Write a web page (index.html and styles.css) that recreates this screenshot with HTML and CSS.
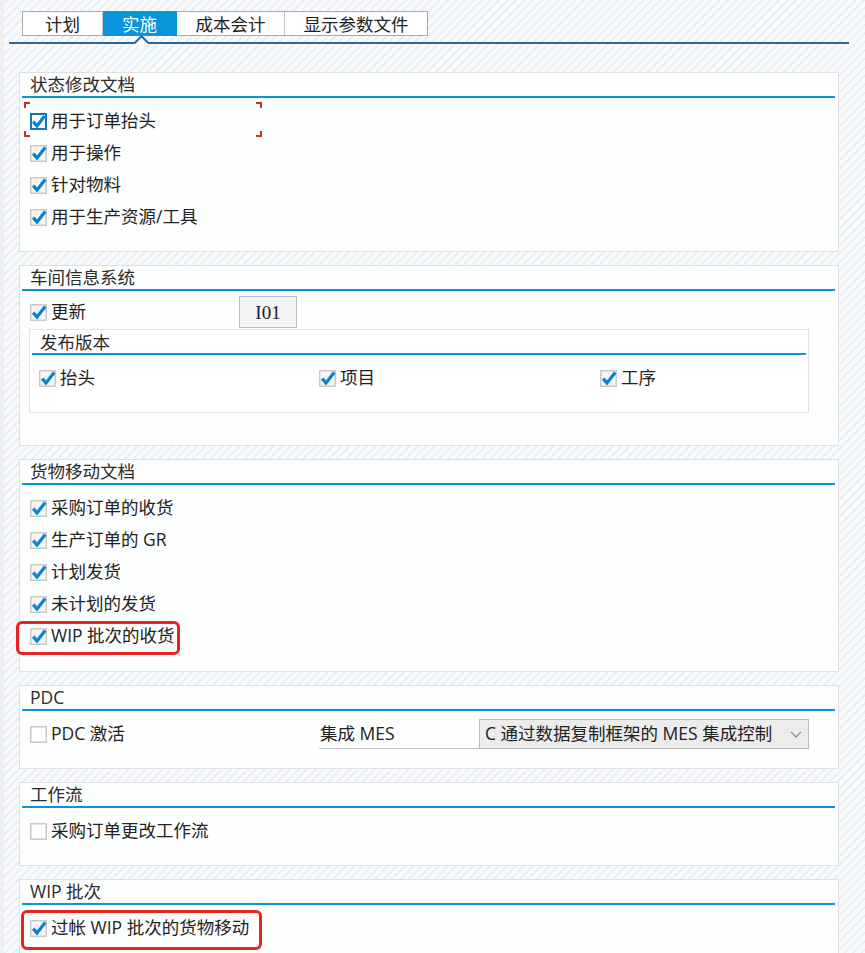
FILE: index.html
```html
<!DOCTYPE html>
<html lang="zh-CN">
<head>
<meta charset="utf-8">
<title>实施</title>
<link rel="stylesheet" href="styles.css">
</head>
<body>
<svg class="defs" width="0" height="0" aria-hidden="true">
  <defs>
    <symbol id="cb-on" viewBox="0 0 17 17">
      <rect x="0.75" y="0.75" width="15.5" height="15.5" fill="#f6f6f6" stroke="#c9c9c9" stroke-width="1.5"/>
      <path d="M3.2 8.6 L7 13 L15.2 2.6" fill="none" stroke="#0a80d2" stroke-width="3.2" stroke-linejoin="miter"/>
    </symbol>
    <symbol id="cb-focus" viewBox="0 0 17 17">
      <rect x="1" y="1" width="15" height="15" fill="#ffffff" stroke="#1a74bd" stroke-width="2"/>
      <path d="M3.2 8.6 L7 13 L14.6 3" fill="none" stroke="#0a80d2" stroke-width="3.2" stroke-linejoin="miter"/>
    </symbol>
    <symbol id="cb-off" viewBox="0 0 17 17">
      <rect x="0.75" y="0.75" width="15.5" height="15.5" fill="#ffffff" stroke="#c9c9c9" stroke-width="1.5"/>
    </symbol>
  </defs>
</svg>

<div class="tabbar">
  <div class="tab tab-1">计划</div>
  <div class="tab tab-2 active">实施</div>
  <div class="tab tab-3">成本会计</div>
  <div class="tab tab-4">显示参数文件</div>
</div>
<div class="tabline"></div>

<main class="content">
  <section class="group">
    <div class="group-head">状态修改文档</div>
    <div class="rows">
      <div class="row focused">
        <span class="focus-frame"></span>
        <svg class="cb"><use href="#cb-focus"/></svg><span>用于订单抬头</span>
      </div>
      <div class="row"><svg class="cb"><use href="#cb-on"/></svg><span>用于操作</span></div>
      <div class="row"><svg class="cb"><use href="#cb-on"/></svg><span>针对物料</span></div>
      <div class="row"><svg class="cb"><use href="#cb-on"/></svg><span>用于生产资源/工具</span></div>
    </div>
  </section>

  <section class="group">
    <div class="group-head">车间信息系统</div>
    <div class="rows rows-sfis">
      <div class="row row-update">
        <div class="cell"><svg class="cb"><use href="#cb-on"/></svg><span>更新</span></div>
        <div class="field-box">I01</div>
      </div>
      <div class="subgroup">
        <div class="sub-head">发布版本</div>
        <div class="sub-rows">
          <div class="row row-three">
            <div class="cell"><svg class="cb"><use href="#cb-on"/></svg><span>抬头</span></div>
            <div class="cell"><svg class="cb"><use href="#cb-on"/></svg><span>项目</span></div>
            <div class="cell"><svg class="cb"><use href="#cb-on"/></svg><span>工序</span></div>
          </div>
        </div>
      </div>
    </div>
  </section>

  <section class="group">
    <div class="group-head">货物移动文档</div>
    <div class="rows rows-tall">
      <div class="row"><svg class="cb"><use href="#cb-on"/></svg><span>采购订单的收货</span></div>
      <div class="row"><svg class="cb"><use href="#cb-on"/></svg><span>生产订单的 GR</span></div>
      <div class="row"><svg class="cb"><use href="#cb-on"/></svg><span>计划发货</span></div>
      <div class="row"><svg class="cb"><use href="#cb-on"/></svg><span>未计划的发货</span></div>
      <div class="row marked">
        <span class="mark mark-wip"></span>
        <svg class="cb"><use href="#cb-on"/></svg><span>WIP 批次的收货</span>
      </div>
    </div>
  </section>

  <section class="group">
    <div class="group-head">PDC</div>
    <div class="rows">
      <div class="row row-pdc">
        <div class="cell"><svg class="cb"><use href="#cb-off"/></svg><span>PDC 激活</span></div>
        <div class="mes-label">集成 MES</div>
        <div class="dropdown">
          <span>C 通过数据复制框架的 MES 集成控制</span>
          <svg class="chev" viewBox="0 0 12 7"><path d="M1 1 L6 6 L11 1" fill="none" stroke="#8a8a8a" stroke-width="1.2"/></svg>
        </div>
      </div>
    </div>
  </section>

  <section class="group">
    <div class="group-head">工作流</div>
    <div class="rows">
      <div class="row"><svg class="cb"><use href="#cb-off"/></svg><span>采购订单更改工作流</span></div>
    </div>
  </section>

  <section class="group">
    <div class="group-head">WIP 批次</div>
    <div class="rows">
      <div class="row marked">
        <span class="mark mark-post"></span>
        <svg class="cb"><use href="#cb-on"/></svg><span>过帐 WIP 批次的货物移动</span>
      </div>
    </div>
  </section>
</main>
</body>
</html>
```

FILE: styles.css
```css
* { box-sizing: border-box; }

html, body {
  margin: 0;
  padding: 0;
}

body {
  width: 865px;
  height: 953px;
  overflow: hidden;
  font-family: "Open Sans", "Noto Sans CJK SC", sans-serif;
  font-size: 17.5px;
  color: #222222;
  background-color: #f7f9fb;
  background-image:
    linear-gradient(90deg, #efefef 0, #efefef 4px, transparent 4px),
    repeating-linear-gradient(135deg, #f8fafc 0, #f8fafc 4px, #e9eff5 4px, #e9eff5 6px);
}

.defs {
  position: absolute;
  width: 0;
  height: 0;
  overflow: hidden;
}

/* ---------- tabs ---------- */
.tabbar {
  display: flex;
  padding: 11px 0 0 22px;
  height: 36px;
}

.tab {
  height: 25px;
  border-top: 1px solid #a9a9a9;
  border-bottom: 1px solid #a9a9a9;
  border-right: 1px solid #c4c4c4;
  background: #ffffff;
  display: flex;
  align-items: center;
  justify-content: center;
  font-family: "Noto Sans CJK SC", sans-serif;
  font-size: 17.5px;
  line-height: 1;
  color: #222;
}

.tab-1 { width: 81px; border-left: 1px solid #a9a9a9; }
.tab-2 { width: 74px; }
.tab-3 { width: 108px; }
.tab-4 { width: 143px; border-right-color: #a9a9a9; }

.tab.active {
  background: #0a94da;
  border-color: #0a94da;
  color: #ffffff;
}

.tabline {
  position: relative;
  margin: 6px 0 0 9px;
  width: 840px;
  height: 2px;
  background: #2d6797;
}

.tabline::after {
  content: "";
  position: absolute;
  left: 127px;
  top: -5px;
  width: 9px;
  height: 9px;
  background: #f7f9fb;
  border-top: 2px solid #2d6797;
  border-left: 2px solid #2d6797;
  transform: rotate(45deg);
}

/* ---------- groups ---------- */
.content {
  padding: 28px 26px 0 19px;
}

.group {
  border: 1px solid #e0e0e0;
  background: #fdfefe;
  margin-bottom: 13px;
}

.group-head {
  margin: 0 3px 0 2px;
  height: 25px;
  padding-left: 8px;
  border-bottom: 2px solid #0a94da;
  line-height: 23px;
  color: #2a2a2a;
}

.rows {
  padding: 7px 0 18px 10px;
}

.rows-tall {
  padding-bottom: 19px;
}

.row {
  height: 32px;
  display: flex;
  align-items: center;
  gap: 4px;
  line-height: 1;
  white-space: nowrap;
}

.cb {
  width: 17px;
  height: 17px;
  flex: none;
}

.cell {
  display: flex;
  align-items: center;
  gap: 4px;
}

/* focus brackets */
.row.focused { position: relative; }

.focus-frame {
  position: absolute;
  left: -6px;
  top: -3px;
  width: 238px;
  height: 35px;
  pointer-events: none;
  background:
    linear-gradient(#c83030, #c83030) left top / 6px 2px no-repeat,
    linear-gradient(#c83030, #c83030) left top / 2px 6px no-repeat,
    linear-gradient(#c83030, #c83030) right top / 6px 2px no-repeat,
    linear-gradient(#c83030, #c83030) right top / 2px 6px no-repeat,
    linear-gradient(#c83030, #c83030) left bottom / 6px 2px no-repeat,
    linear-gradient(#c83030, #c83030) left bottom / 2px 6px no-repeat,
    linear-gradient(#c83030, #c83030) right bottom / 6px 2px no-repeat,
    linear-gradient(#c83030, #c83030) right bottom / 2px 6px no-repeat;
}

/* red annotation boxes */
.row.marked { position: relative; }

.mark {
  position: absolute;
  border: 3px solid #e8221e;
  border-radius: 6px;
  pointer-events: none;
}

.mark-wip {
  left: -14px;
  top: 1px;
  width: 164px;
  height: 34px;
}

.mark-post {
  left: -9px;
  top: -2px;
  width: 241px;
  height: 40px;
}

/* ---------- shop floor section ---------- */
.rows-sfis {
  padding: 5px 0 32px 10px;
}

.row-update {
  display: grid;
  grid-template-columns: 209px 58px;
  gap: 0;
}

.field-box {
  height: 32px;
  border: 1px solid #bdbdbd;
  background: #f4f4f4;
  display: flex;
  align-items: center;
  justify-content: center;
  font-family: "Liberation Serif", serif;
  font-size: 19px;
  color: #1c1c2a;
}

.subgroup {
  margin: 1px 29px 0 -1px;
  border: 1px solid #e2e2e2;
  background: #ffffff;
}

.sub-head {
  margin: 0 2px;
  height: 25px;
  padding-left: 8px;
  border-bottom: 2px solid #0a94da;
  line-height: 24px;
  color: #2a2a2a;
}

.sub-rows {
  padding: 7px 0 18px 9px;
}

.row-three {
  display: grid;
  grid-template-columns: 280px 281px 1fr;
  gap: 0;
}

/* ---------- PDC section ---------- */
.row-pdc {
  display: grid;
  grid-template-columns: 289px 160px 330px;
  gap: 0;
  align-items: center;
}

.mes-label {
  height: 30px;
  border-bottom: 1px solid #c4c4c4;
  display: flex;
  align-items: center;
  padding-left: 1px;
}

.dropdown {
  height: 30px;
  border: 1px solid #bababa;
  background: #ececec;
  display: flex;
  align-items: center;
  justify-content: space-between;
  padding: 0 6px 0 5px;
}

.chev {
  width: 12px;
  height: 7px;
}
```
